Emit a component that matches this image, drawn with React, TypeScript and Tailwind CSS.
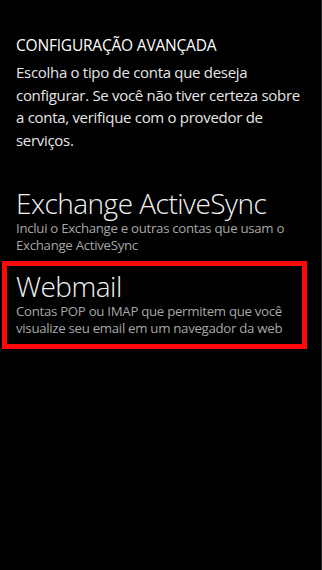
import React from "react";

export default function App() {
  const font = { fontFamily: '"Open Sans", "Noto Sans", sans-serif' };
  return (
    <div className="w-[322px] h-[570px] bg-black text-white overflow-hidden flex" style={font}>
      <div className="flex-1 flex flex-col pt-[35px]">
        <div className="pl-4 pr-2">
          <div className="text-[15.5px] leading-[20px] text-white tracking-[-0.2px]">CONFIGURAÇÃO AVANÇADA</div>
          <p className="mt-[6px] w-[286px] text-[15px] leading-[22.7px] text-[#e6e6e6] tracking-[-0.3px]">
            Escolha o tipo de conta que deseja configurar. Se você não tiver certeza sobre a conta, verifique com o provedor de serviços.
          </p>
        </div>
        <div className="pl-4 pr-2 mt-[34px]">
          <div className="text-[28px] leading-[34px] font-light text-[#f2f2f2] tracking-[-0.5px]">Exchange ActiveSync</div>
          <div className="text-[13.25px] leading-[17px] text-[#a6a6a6] tracking-[-0.3px] w-[282px]">
            Inclui o Exchange e outras contas que usam o Exchange ActiveSync
          </div>
        </div>
        <div className="ml-[2px] mt-[7px] w-[305px] border-[5px] border-[#ff0a0a] pl-[9px] pt-[3px] pb-[7px]">
          <div className="text-[28px] leading-[34px] font-light text-[#f2f2f2] tracking-[-0.5px]">Webmail</div>
          <div className="text-[13.25px] leading-[17px] text-[#a6a6a6] tracking-[-0.3px]">
            Contas POP ou IMAP que permitem que você visualize seu email em um navegador da web
          </div>
        </div>
      </div>
      <div className="w-px bg-[#2a2a2a]" />
    </div>
  );
}
